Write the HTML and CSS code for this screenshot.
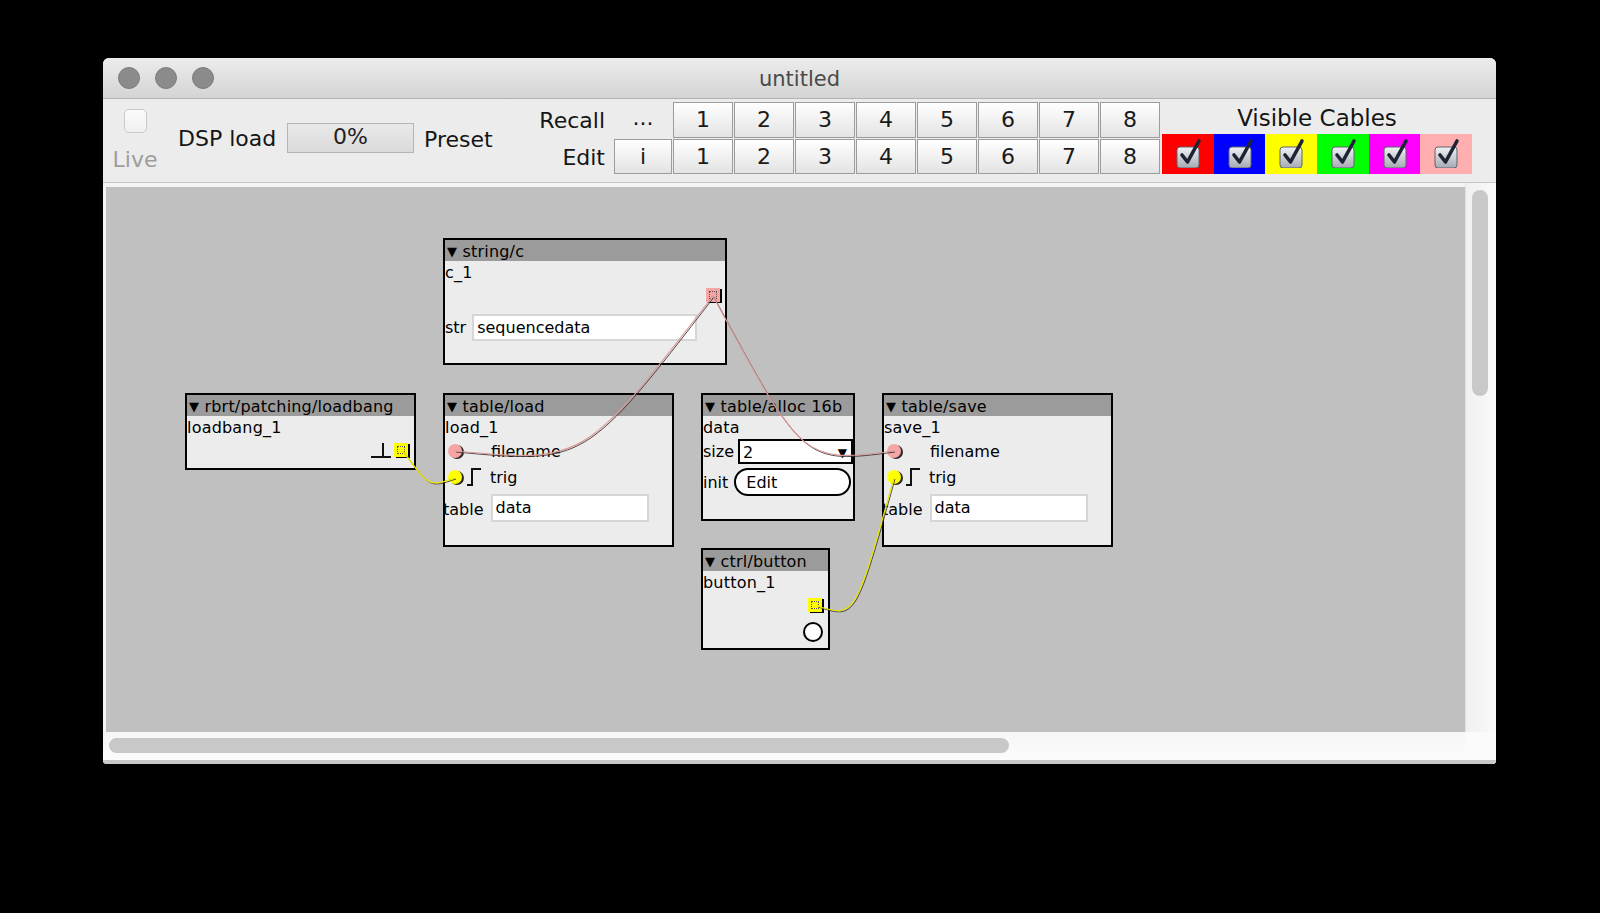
FILE: index.html
```html
<!DOCTYPE html>
<html>
<head>
<meta charset="utf-8">
<title>untitled</title>
<link rel="stylesheet" href="styles.css">
</head>
<body>
<div class="window">
  <div class="titlebar">
    <div class="lights"><span class="light"></span><span class="light"></span><span class="light"></span></div>
    <div class="title">untitled</div>
    <div></div>
  </div>

  <div class="toolbar">
    <div class="live">
      <span class="live-box"></span>
      <span class="live-label">Live</span>
    </div>
    <span class="lbl dsp-lbl">DSP load</span>
    <div class="dsp-box">0%</div>
    <span class="lbl preset-lbl">Preset</span>
    <div class="presets">
      <span class="plabel">Recall</span>
      <span class="dots">...</span>
      <span class="pbtn">1</span><span class="pbtn">2</span><span class="pbtn">3</span><span class="pbtn">4</span>
      <span class="pbtn">5</span><span class="pbtn">6</span><span class="pbtn">7</span><span class="pbtn">8</span>
      <span class="plabel">Edit</span>
      <span class="pbtn">i</span>
      <span class="pbtn">1</span><span class="pbtn">2</span><span class="pbtn">3</span><span class="pbtn">4</span>
      <span class="pbtn">5</span><span class="pbtn">6</span><span class="pbtn">7</span><span class="pbtn">8</span>
    </div>
    <div class="cables">
      <div class="cables-title">Visible Cables</div>
      <div class="cable-row">
        <span class="cc c-red"><svg class="chk" viewBox="0 0 30 32" width="30" height="32"><defs><linearGradient id="cg" x1="0" y1="0" x2="0" y2="1"><stop offset="0" stop-color="#f2f3f6"/><stop offset="1" stop-color="#a4a9b3"/></linearGradient></defs><rect x="4" y="11" width="22" height="21" rx="3" fill="url(#cg)" stroke="#5e636d" stroke-width="1"/><path d="M9 19 L14.5 26 L26 5" fill="none" stroke="#1d2535" stroke-width="3.6" stroke-linecap="round" stroke-linejoin="round"/></svg></span>
        <span class="cc c-blue"><svg class="chk" viewBox="0 0 30 32" width="30" height="32"><rect x="4" y="11" width="22" height="21" rx="3" fill="url(#cg)" stroke="#5e636d" stroke-width="1"/><path d="M9 19 L14.5 26 L26 5" fill="none" stroke="#1d2535" stroke-width="3.6" stroke-linecap="round" stroke-linejoin="round"/></svg></span>
        <span class="cc c-yellow"><svg class="chk" viewBox="0 0 30 32" width="30" height="32"><rect x="4" y="11" width="22" height="21" rx="3" fill="url(#cg)" stroke="#5e636d" stroke-width="1"/><path d="M9 19 L14.5 26 L26 5" fill="none" stroke="#1d2535" stroke-width="3.6" stroke-linecap="round" stroke-linejoin="round"/></svg></span>
        <span class="cc c-green"><svg class="chk" viewBox="0 0 30 32" width="30" height="32"><rect x="4" y="11" width="22" height="21" rx="3" fill="url(#cg)" stroke="#5e636d" stroke-width="1"/><path d="M9 19 L14.5 26 L26 5" fill="none" stroke="#1d2535" stroke-width="3.6" stroke-linecap="round" stroke-linejoin="round"/></svg></span>
        <span class="cc c-magenta"><svg class="chk" viewBox="0 0 30 32" width="30" height="32"><rect x="4" y="11" width="22" height="21" rx="3" fill="url(#cg)" stroke="#5e636d" stroke-width="1"/><path d="M9 19 L14.5 26 L26 5" fill="none" stroke="#1d2535" stroke-width="3.6" stroke-linecap="round" stroke-linejoin="round"/></svg></span>
        <span class="cc c-pink"><svg class="chk" viewBox="0 0 30 32" width="30" height="32"><rect x="4" y="11" width="22" height="21" rx="3" fill="url(#cg)" stroke="#5e636d" stroke-width="1"/><path d="M9 19 L14.5 26 L26 5" fill="none" stroke="#1d2535" stroke-width="3.6" stroke-linecap="round" stroke-linejoin="round"/></svg></span>
      </div>
    </div>
  </div>

  <div class="main">
    <div class="canvas-wrap">
      <div class="canvas">

        <div class="obj o-string">
          <div class="hdr"><span class="tri">▼</span> string/c</div>
          <div class="name">c_1</div>
          <div class="row out-row"><span class="jack-out j-pink"></span></div>
          <div class="row param-row"><span class="plbl">str</span><span class="field f-str">sequencedata</span></div>
        </div>

        <div class="obj o-loadbang">
          <div class="hdr"><span class="tri">▼</span> rbrt/patching/loadbang</div>
          <div class="name">loadbang_1</div>
          <div class="row out-row lb-row">
            <svg class="pulse" width="20" height="16" viewBox="0 0 20 16"><path d="M0 15 H20 M12 15 V1" fill="none" stroke="#111" stroke-width="2"/></svg>
            <span class="jack-out j-yellow"></span>
          </div>
        </div>

        <div class="obj o-load">
          <div class="hdr"><span class="tri">▼</span> table/load</div>
          <div class="name">load_1</div>
          <div class="row in-row"><span class="jack-in j-pink"></span><span class="in-lbl fn-lbl">filename</span></div>
          <div class="row in-row"><span class="jack-in j-yellow"></span><svg class="trig" width="14" height="18" viewBox="0 0 14 18"><path d="M0 17 H5 V1 H14" fill="none" stroke="#111" stroke-width="2"/></svg><span class="in-lbl trig-lbl">trig</span></div>
          <div class="row tbl-row"><span class="plbl tbl-lbl">table</span><span class="field f-tbl">data</span></div>
        </div>

        <div class="obj o-alloc">
          <div class="hdr"><span class="tri">▼</span> table/alloc 16b</div>
          <div class="name">data</div>
          <div class="row size-row"><span class="plbl">size</span><span class="dropdown"><span>2</span><span class="dd-arrow">▼</span></span></div>
          <div class="row init-row"><span class="plbl">init</span><span class="editbtn">Edit</span></div>
        </div>

        <div class="obj o-save">
          <div class="hdr"><span class="tri">▼</span> table/save</div>
          <div class="name">save_1</div>
          <div class="row in-row"><span class="jack-in j-pink"></span><span class="in-lbl fn-lbl">filename</span></div>
          <div class="row in-row"><span class="jack-in j-yellow"></span><svg class="trig" width="14" height="18" viewBox="0 0 14 18"><path d="M0 17 H5 V1 H14" fill="none" stroke="#111" stroke-width="2"/></svg><span class="in-lbl trig-lbl">trig</span></div>
          <div class="row tbl-row"><span class="plbl tbl-lbl">table</span><span class="field f-tbl">data</span></div>
        </div>

        <div class="obj o-button">
          <div class="hdr"><span class="tri">▼</span> ctrl/button</div>
          <div class="name">button_1</div>
          <div class="row out-row btn-out"><span class="jack-out j-yellow"></span></div>
          <div class="row circ-row"><span class="bcircle"></span></div>
        </div>

        <svg class="wires" width="1359" height="545" viewBox="0 0 1359 545">
          <g class="w-shadow" transform="translate(1 1)">
            <path d="M607 109 C478 276 478 276 349 264"/>
            <path d="M607 109 C697 276 697 276 788 264"/>
            <path d="M297 264 C323 300 323 300 349 291"/>
            <path d="M711 419 C749 431 749 431 788 291"/>
          </g>
          <g class="w-pink">
            <path d="M607 109 C478 276 478 276 349 264"/>
            <path d="M607 109 C697 276 697 276 788 264"/>
          </g>
          <g class="w-yellow">
            <path d="M297 264 C323 300 323 300 349 291"/>
            <path d="M711 419 C749 431 749 431 788 291"/>
          </g>
        </svg>

      </div>
    </div>
    <div class="vscroll"><div class="vthumb"></div></div>
    <div class="hscroll"><div class="hthumb"></div></div>
    <div class="corner"></div>
  </div>
</div>
</body>
</html>
```

FILE: styles.css
```css
* { box-sizing: border-box; }

html, body {
  margin: 0;
  padding: 0;
  background: #000;
}

body {
  padding: 58px 0 0 103px;
  height: 913px;
  overflow: hidden;
  font-family: "DejaVu Sans", "Liberation Sans", sans-serif;
  color: #111;
}

.window {
  width: 1393px;
  height: 706px;
  background: #ececec;
  border-radius: 6px 6px 4px 4px;
  overflow: hidden;
  display: flex;
  flex-direction: column;
}

/* ---------- title bar ---------- */
.titlebar {
  height: 41px;
  flex: none;
  background: linear-gradient(#ececec, #d4d4d4);
  border-bottom: 1px solid #b3b3b3;
  display: grid;
  grid-template-columns: 1fr auto 1fr;
  align-items: center;
}

.lights {
  display: flex;
  gap: 15px;
  padding-left: 15px;
}

.light {
  width: 22px;
  height: 22px;
  border-radius: 50%;
  background: #8b8b8b;
  border: 1px solid #7b7b7b;
}

.title {
  font-size: 21px;
  color: #4a4a4a;
  line-height: 24px;
  padding-top: 2px;
}

/* ---------- toolbar ---------- */
.toolbar {
  height: 84px;
  flex: none;
  border-bottom: 1px solid #c6c6c6;
  background: #ececec;
  display: flex;
  align-items: flex-start;
  font-size: 22px;
  color: #151515;
}

.live {
  margin-left: 9px;
  width: 46px;
  display: flex;
  flex-direction: column;
  align-items: center;
  padding-top: 10px;
}

.live-box {
  width: 23px;
  height: 24px;
  border-radius: 5px;
  border: 1px solid #c9c9c9;
  background: linear-gradient(#fbfbfb, #f0f0f0);
}

.live-label {
  margin-top: 16px;
  line-height: 22px;
  color: #9d9d9d;
  font-size: 22px;
}

.lbl {
  line-height: 26px;
  white-space: nowrap;
}

.dsp-lbl {
  margin-left: 20px;
  width: 100px;
  padding-top: 27px;
  box-sizing: content-box;
}

.dsp-box {
  margin-left: 9px;
  margin-top: 24px;
  width: 127px;
  height: 30px;
  border: 1px solid #b5b5b5;
  background: linear-gradient(#e9e9e9, #dadada);
  text-align: center;
  line-height: 26px;
  font-size: 22px;
  color: #222;
}

.preset-lbl {
  margin-left: 10px;
  width: 72px;
  padding-top: 28px;
  box-sizing: content-box;
}

.presets {
  margin-top: 3px;
  display: grid;
  grid-template-columns: 117px 58px repeat(8, 60px);
  grid-template-rows: 36px 35px;
  column-gap: 1px;
  row-gap: 1px;
  align-items: stretch;
}

.plabel {
  text-align: right;
  padding-right: 8px;
  line-height: 37px;
}

.dots {
  text-align: center;
  line-height: 32px;
}

.pbtn {
  border: 1px solid #9c9c9c;
  background: linear-gradient(#ffffff, #e3e3e3);
  text-align: center;
  line-height: 34px;
  font-size: 22px;
  color: #1a1a1a;
}

.cables {
  margin-left: 2px;
  width: 310px;
}

.cables-title {
  margin-top: 6px;
  line-height: 26px;
  text-align: center;
  font-size: 23px;
}

.cable-row {
  margin-top: 3px;
  height: 40px;
  display: flex;
}

.cc {
  flex: 1;
  display: flex;
  align-items: flex-start;
  justify-content: center;
}

.chk { margin-top: 2px; }

.c-red { background: #ff0000; }
.c-blue { background: #0000ff; }
.c-yellow { background: #ffff00; }
.c-green { background: #00ff00; }
.c-magenta { background: #ff00ff; }
.c-pink { background: #ffafaf; }

/* ---------- main area ---------- */
.main {
  flex: 1;
  display: grid;
  grid-template-columns: 1362px 31px;
  grid-template-rows: 549px 32px;
  background: #f5f5f5;
}

.canvas-wrap {
  padding: 4px 0 0 3px;
  background: #f4f4f4;
}

.canvas {
  width: 1359px;
  height: 545px;
  background: #c0c0c0;
  position: relative;
  overflow: hidden;
  font-size: 16px;
}

.vscroll {
  background: linear-gradient(90deg, #f0f0f0, #fafafa);
  border-left: 1px solid #e2e2e2;
  padding: 7px 0 0 6px;
}

.vthumb {
  width: 16px;
  height: 206px;
  border-radius: 8px;
  background: #c8c8c8;
}

.hscroll {
  background: linear-gradient(#f6f6f6, #fbfbfb);
  padding: 6px 0 0 6px;
  border-bottom: 4px solid #c9c9cb;
}

.hthumb {
  width: 900px;
  height: 15px;
  border-radius: 8px;
  background: #c8c8c8;
}

.corner {
  background: #fbfbfb;
  border-bottom: 4px solid #c9c9cb;
}

/* ---------- objects ---------- */
.obj {
  position: absolute;
  border: 2px solid #000;
  background: #ececec;
  color: #000;
  font-size: 16px;
  display: flex;
  flex-direction: column;
}

.hdr {
  height: 21px;
  flex: none;
  background: #9b9b9b;
  line-height: 23px;
  padding-left: 2px;
  white-space: nowrap;
  overflow: hidden;
  letter-spacing: 0.2px;
}

.tri {
  font-size: 13px;
  position: relative;
  top: -1px;
}

.name {
  height: 20px;
  flex: none;
  line-height: 23px;
  padding-left: 0;
  white-space: nowrap;
  letter-spacing: 0.2px;
}

.row {
  display: flex;
  align-items: center;
  flex: none;
}

.out-row {
  height: 28px;
  justify-content: flex-end;
  padding-right: 5px;
}

.jack-out {
  width: 14px;
  height: 14px;
  outline: 1px dotted #555;
  outline-offset: -4px;
  box-shadow: 2px 1px 0 #000;
}

.j-pink { background: #f6a5a5; }
.j-yellow { background: #ffff00; }

.lb-row { padding-right: 6px; }
.pulse { margin-right: 3px; }
.btn-out { height: 28px; padding-right: 6px; }

.param-row {
  height: 36px;
}

.plbl {
  white-space: nowrap;
}

.field {
  background: #fff;
  border: 2px solid #d6d6d6;
  white-space: nowrap;
  overflow: hidden;
  padding-left: 3px;
  line-height: 23px;
}

.f-str {
  margin-left: 6px;
  width: 225px;
  height: 27px;
}

.in-row {
  height: 26px;
}

.o-load .name + .in-row,
.o-save .name + .in-row { margin-top: 2px; }

.jack-in {
  width: 14px;
  height: 14px;
  border-radius: 50%;
  margin-left: 3px;
  box-shadow: 2px 1px 0 #2a2a2a;
}

.fn-lbl { margin-left: 29px; }
.trig { margin-left: 5px; }
.trig-lbl { margin-left: 9px; }

.tbl-row {
  height: 32px;
  margin-top: 2px;
}

.tbl-lbl { margin-left: -2px; padding-top: 3px; }

.f-tbl {
  margin-left: 7px;
  width: 158px;
  height: 28px;
  line-height: 24px;
}

.size-row {
  height: 29px;
  margin-top: 1px;
}

.dropdown {
  margin-left: 4px;
  width: 115px;
  height: 25px;
  border: 2px solid #000;
  background: #fff;
  display: flex;
  justify-content: space-between;
  align-items: center;
  padding: 2px 4px 0 3px;
}

.dd-arrow { font-size: 12px; }

.init-row {
  height: 32px;
}

.editbtn {
  margin-left: 6px;
  width: 117px;
  height: 28px;
  border: 2px solid #000;
  border-radius: 14px;
  background: #fff;
  line-height: 25px;
  padding-left: 10px;
}

.circ-row {
  height: 26px;
  justify-content: flex-end;
  padding-right: 5px;
}

.bcircle {
  width: 20px;
  height: 20px;
  border-radius: 50%;
  border: 2px solid #000;
  background: #fff;
}

.o-string { left: 337px; top: 51px; width: 284px; height: 127px; }
.o-loadbang { left: 79px; top: 206px; width: 231px; height: 77px; }
.o-load { left: 337px; top: 206px; width: 231px; height: 154px; }
.o-alloc { left: 595px; top: 206px; width: 154px; height: 128px; }
.o-save { left: 776px; top: 206px; width: 231px; height: 154px; }
.o-button { left: 595px; top: 361px; width: 129px; height: 102px; }

/* ---------- wires ---------- */
.wires {
  position: absolute;
  left: 0;
  top: 0;
  pointer-events: none;
}

.wires path {
  fill: none;
}

.w-shadow path {
  stroke: #3a2c2c;
  stroke-width: 1;
  opacity: 0.85;
}

.w-pink path {
  stroke: #d99a9a;
  stroke-width: 1.2;
}

.w-yellow path {
  stroke: #e6e600;
  stroke-width: 1.3;
}
```
